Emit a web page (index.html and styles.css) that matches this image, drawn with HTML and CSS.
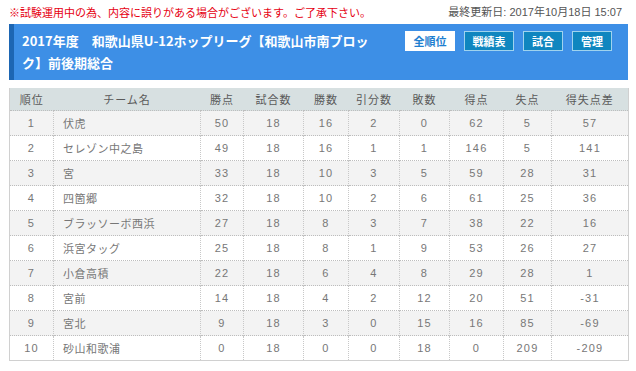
FILE: index.html
```html
<!DOCTYPE html>
<html lang="ja">
<head>
<meta charset="utf-8">
<link rel="stylesheet" href="styles.css">
</head>
<body>
<div class="page">
  <div class="topline">
    <span class="notice">※試験運用中の為、内容に誤りがある場合がございます。ご了承下さい。</span>
    <span class="updated">最終更新日: 2017年10月18日 15:07</span>
  </div>
  <div class="banner">
    <h1 class="title">2017年度　和歌山県U-12ホップリーグ【和歌山市南ブロック】前後期総合</h1>
    <nav class="btns">
      <a class="btn btn-active w50">全順位</a>
      <a class="btn w50">戦績表</a>
      <a class="btn w40">試合</a>
      <a class="btn w40">管理</a>
    </nav>
  </div>
  <table class="standings">
    <colgroup>
      <col class="c1"><col class="c2"><col class="c3"><col class="c4"><col class="c5"><col class="c6"><col class="c7"><col class="c8"><col class="c9"><col class="c10">
    </colgroup>
    <thead>
      <tr><th>順位</th><th>チーム名</th><th>勝点</th><th>試合数</th><th>勝数</th><th>引分数</th><th>敗数</th><th>得点</th><th>失点</th><th>得失点差</th></tr>
    </thead>
    <tbody>
      <tr><td>1</td><td class="name">伏虎</td><td>50</td><td>18</td><td>16</td><td>2</td><td>0</td><td>62</td><td>5</td><td>57</td></tr>
      <tr><td>2</td><td class="name">セレゾン中之島</td><td>49</td><td>18</td><td>16</td><td>1</td><td>1</td><td>146</td><td>5</td><td>141</td></tr>
      <tr><td>3</td><td class="name">宮</td><td>33</td><td>18</td><td>10</td><td>3</td><td>5</td><td>59</td><td>28</td><td>31</td></tr>
      <tr><td>4</td><td class="name">四箇郷</td><td>32</td><td>18</td><td>10</td><td>2</td><td>6</td><td>61</td><td>25</td><td>36</td></tr>
      <tr><td>5</td><td class="name">ブラッソーボ西浜</td><td>27</td><td>18</td><td>8</td><td>3</td><td>7</td><td>38</td><td>22</td><td>16</td></tr>
      <tr><td>6</td><td class="name">浜宮タッグ</td><td>25</td><td>18</td><td>8</td><td>1</td><td>9</td><td>53</td><td>26</td><td>27</td></tr>
      <tr><td>7</td><td class="name">小倉高積</td><td>22</td><td>18</td><td>6</td><td>4</td><td>8</td><td>29</td><td>28</td><td>1</td></tr>
      <tr><td>8</td><td class="name">宮前</td><td>14</td><td>18</td><td>4</td><td>2</td><td>12</td><td>20</td><td>51</td><td>-31</td></tr>
      <tr><td>9</td><td class="name">宮北</td><td>9</td><td>18</td><td>3</td><td>0</td><td>15</td><td>16</td><td>85</td><td>-69</td></tr>
      <tr><td>10</td><td class="name">砂山和歌浦</td><td>0</td><td>18</td><td>0</td><td>0</td><td>18</td><td>0</td><td>209</td><td>-209</td></tr>
    </tbody>
  </table>
</div>
</body>
</html>
```
FILE: styles.css
```css
html, body {
  margin: 0;
  padding: 0;
  background: #fff;
}
body {
  font-family: "Liberation Sans", "Noto Sans CJK JP", sans-serif;
  color: #777;
}
.page {
  width: 619px;
  padding: 5px 8px 0 9px;
}
.topline {
  display: flex;
  justify-content: space-between;
  align-items: center;
  height: 14px;
  font-size: 11px;
  line-height: 14px;
  font-family: "Noto Sans CJK JP", sans-serif;
}
.notice {
  color: #e60012;
}
.updated {
  color: #555;
  padding-right: 6px;
  font-family: "Liberation Sans", "Noto Sans CJK JP", sans-serif;
}
.banner {
  margin-top: 5px;
  background: #3d8fe6;
  border-left: 5px solid #1d66b3;
  height: 56px;
  box-sizing: border-box;
  display: flex;
  justify-content: space-between;
  align-items: flex-start;
  padding: 6px 16px 6px 8px;
}
.title {
  margin: 0;
  width: 348px;
  color: #fff;
  font-family: "Noto Sans CJK JP", sans-serif;
  font-weight: bold;
  font-size: 13px;
  line-height: 22px;
}
.btns {
  display: flex;
  gap: 9px;
  margin-top: 1px;
}
.btn {
  display: flex;
  align-items: center;
  justify-content: center;
  height: 20px;
  box-sizing: border-box;
  background: #0f86bf;
  border: 1px solid #9fd3ee;
  color: #fff;
  font-family: "Noto Sans CJK JP", sans-serif;
  font-weight: bold;
  font-size: 11px;
}
.btn-active {
  background: #fff;
  border-color: #fff;
  color: #1f7fd0;
}
.w50 { width: 50px; }
.w40 { width: 40px; }
.standings {
  margin-top: 8px;
  width: 619px;
  border-collapse: collapse;
  table-layout: fixed;
  font-size: 11px;
  border: 1px solid #d0d0d0;
  border-top: none;
}
.c1 { width: 44px; }
.c2 { width: 147px; }
.c3 { width: 43px; }
.c4 { width: 60px; }
.c5 { width: 45px; }
.c6 { width: 51px; }
.c7 { width: 50px; }
.c8 { width: 54px; }
.c9 { width: 48px; }
.c10 { width: 77px; }
.standings th {
  background: #d7e0e1;
  color: #5a5a5a;
  font-weight: normal;
  height: 22px;
  padding: 0;
  font-family: "Noto Sans CJK JP", sans-serif;
  letter-spacing: 1px;
}
.standings td {
  height: 24px;
  padding: 0;
  text-align: center;
  border-top: 1px dotted #bdbdbd;
  border-left: 1px dotted #c8c8c8;
  letter-spacing: 1.2px;
}
.standings td:first-child {
  border-left: none;
}
.standings td.name {
  text-align: left;
  padding-left: 9px;
  letter-spacing: 0.5px;
  font-family: "Noto Sans CJK JP", sans-serif;
}
.standings tbody tr:nth-child(odd) td {
  background: #f3f3f3;
}
```
